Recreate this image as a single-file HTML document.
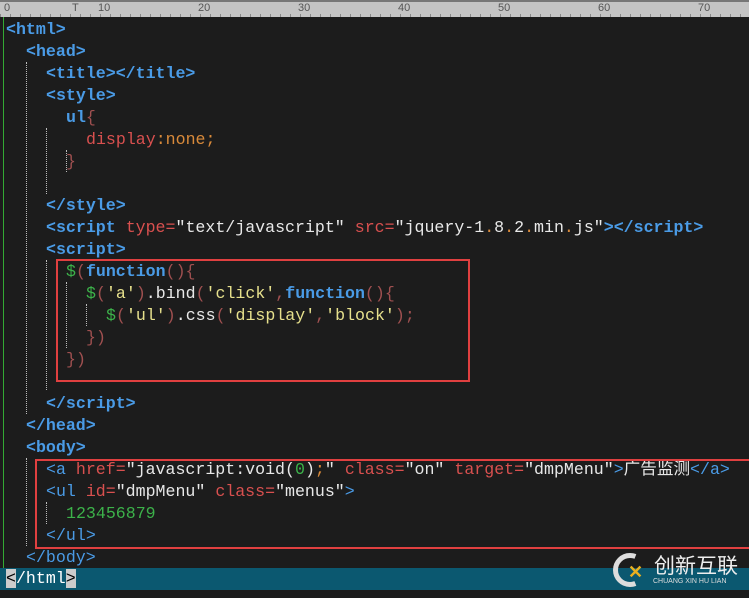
<!DOCTYPE html>
<html><head><meta charset="utf-8"><style>
body{margin:0;width:749px;height:598px;background:#1c1c1c;overflow:hidden;position:relative;font-family:"Liberation Mono","Noto Sans CJK SC",monospace;font-size:16.6px}
.ruler{position:absolute;left:0;top:0;width:749px;height:17px;background:#c4c4c4;border-top:2px solid #777;box-sizing:border-box;font-family:"Liberation Sans",sans-serif;font-size:11px;color:#555}
.ruler span{position:absolute;top:0}
.l{position:absolute;height:22px;line-height:22px;white-space:pre;color:#e8e8e8;margin-top:2px}
.t{color:#4a9be6;font-weight:bold}
.tn{color:#4a9be6}
.a{color:#d9504f}
.o{color:#d98a3a}
.p{color:#a05050}
.g{color:#3cb24a}
.y{color:#e6e08c}
.status{position:absolute;left:0;top:568px;width:749px;height:22px;background:#0b5870}
.box{position:absolute;border:2px solid #e04040}
.guide{position:absolute;border-left:1px dotted #bbb;width:0}
</style></head><body>
<div class="ruler">
<span style="left:4px">0</span><span style="left:72px">T</span><span style="left:98px">10</span><span style="left:198px">20</span><span style="left:298px">30</span><span style="left:398px">40</span><span style="left:498px">50</span><span style="left:598px">60</span><span style="left:698px">70</span>
<div style="position:absolute;left:0;right:0;bottom:0;height:3px;background:repeating-linear-gradient(90deg,#888 0 1px,transparent 1px 10px)"></div>
</div>
<div style="position:absolute;left:3px;top:17px;width:1px;height:551px;background:#3a3"></div>
<div class="status"></div>
<div class="guide" style="left:26px;top:62px;height:352px"></div>
<div class="guide" style="left:46px;top:128px;height:66px"></div>
<div class="guide" style="left:46px;top:260px;height:130px"></div>
<div class="guide" style="left:66px;top:150px;height:22px"></div>
<div class="guide" style="left:66px;top:282px;height:66px"></div>
<div class="guide" style="left:86px;top:304px;height:22px"></div>
<div class="guide" style="left:26px;top:458px;height:88px"></div>
<div class="guide" style="left:46px;top:502px;height:22px"></div>

<div class="l" style="left:6px;top:17px"><span class="t">&lt;html&gt;</span></div>
<div class="l" style="left:26px;top:39px"><span class="t">&lt;head&gt;</span></div>
<div class="l" style="left:46px;top:61px"><span class="t">&lt;title&gt;&lt;/title&gt;</span></div>
<div class="l" style="left:46px;top:83px"><span class="t">&lt;style&gt;</span></div>
<div class="l" style="left:66px;top:105px"><span class="t">ul</span><span class="p">{</span></div>
<div class="l" style="left:86px;top:127px"><span class="a">display</span><span class="o">:none;</span></div>
<div class="l" style="left:66px;top:149px"><span class="p">}</span></div>
<div class="l" style="left:46px;top:193px"><span class="t">&lt;/style&gt;</span></div>
<div class="l" style="left:46px;top:215px"><span class="t">&lt;script</span> <span class="a">type=</span>"text/javascript" <span class="a">src=</span>"jquery-1<span class="o">.</span>8<span class="o">.</span>2<span class="o">.</span>min<span class="o">.</span>js"<span class="t">&gt;&lt;/script&gt;</span></div>
<div class="l" style="left:46px;top:237px"><span class="t">&lt;script&gt;</span></div>
<div class="l" style="left:66px;top:259px"><span class="g">$</span><span class="p">(</span><span class="t">function</span><span class="p">(){</span></div>
<div class="l" style="left:86px;top:281px"><span class="g">$</span><span class="p">(</span><span class="y">'a'</span><span class="p">)</span>.bind<span class="p">(</span><span class="y">'click'</span><span class="p">,</span><span class="t">function</span><span class="p">(){</span></div>
<div class="l" style="left:106px;top:303px"><span class="g">$</span><span class="p">(</span><span class="y">'ul'</span><span class="p">)</span>.css<span class="p">(</span><span class="y">'display'</span><span class="p">,</span><span class="y">'block'</span><span class="p">);</span></div>
<div class="l" style="left:86px;top:325px"><span class="p">})</span></div>
<div class="l" style="left:66px;top:347px"><span class="p">})</span></div>
<div class="l" style="left:46px;top:391px"><span class="t">&lt;/script&gt;</span></div>
<div class="l" style="left:26px;top:413px"><span class="t">&lt;/head&gt;</span></div>
<div class="l" style="left:26px;top:435px"><span class="t">&lt;body&gt;</span></div>
<div class="l" style="left:46px;top:457px"><span class="tn">&lt;a</span> <span class="a">href=</span>"javascript:void(<span class="g">0</span>)<span class="o">;</span>" <span class="a">class=</span>"on" <span class="a">target=</span>"dmpMenu"<span class="tn">&gt;</span>广告监测<span class="tn">&lt;/a&gt;</span></div>
<div class="l" style="left:46px;top:479px"><span class="tn">&lt;ul</span> <span class="a">id=</span>"dmpMenu" <span class="a">class=</span>"menus"<span class="tn">&gt;</span></div>
<div class="l" style="left:66px;top:501px"><span class="g">123456879</span></div>
<div class="l" style="left:46px;top:523px"><span class="tn">&lt;/ul&gt;</span></div>
<div class="l" style="left:26px;top:545px"><span class="tn">&lt;/body&gt;</span></div>
<div class="l" style="left:6px;top:566px;color:#fff"><span style="background:#ccc;color:#000">&lt;</span>/html<span style="background:#ccc;color:#000">&gt;</span></div>

<div class="box" style="left:56px;top:259px;width:410px;height:119px"></div>
<div class="box" style="left:35px;top:459px;width:716px;height:86px"></div>

<div style="position:absolute;left:613px;top:553px;width:34px;height:34px;border-radius:50%;border:5px solid #ddd;box-sizing:border-box;clip-path:polygon(0 0,70% 0,50% 50%,70% 100%,0 100%)"></div>
<div style="position:absolute;left:628px;top:562px;color:#e8b020;font:bold 18px 'Liberation Sans',sans-serif">✕</div>
<div style="position:absolute;left:654px;top:553px;color:#eee;font:21px 'Noto Sans CJK SC',sans-serif;line-height:24px">创新互联</div>
<div style="position:absolute;left:653px;top:578px;color:#ddd;font:7px 'Liberation Sans',sans-serif">CHUANG XIN HU LIAN</div>
</body></html>
